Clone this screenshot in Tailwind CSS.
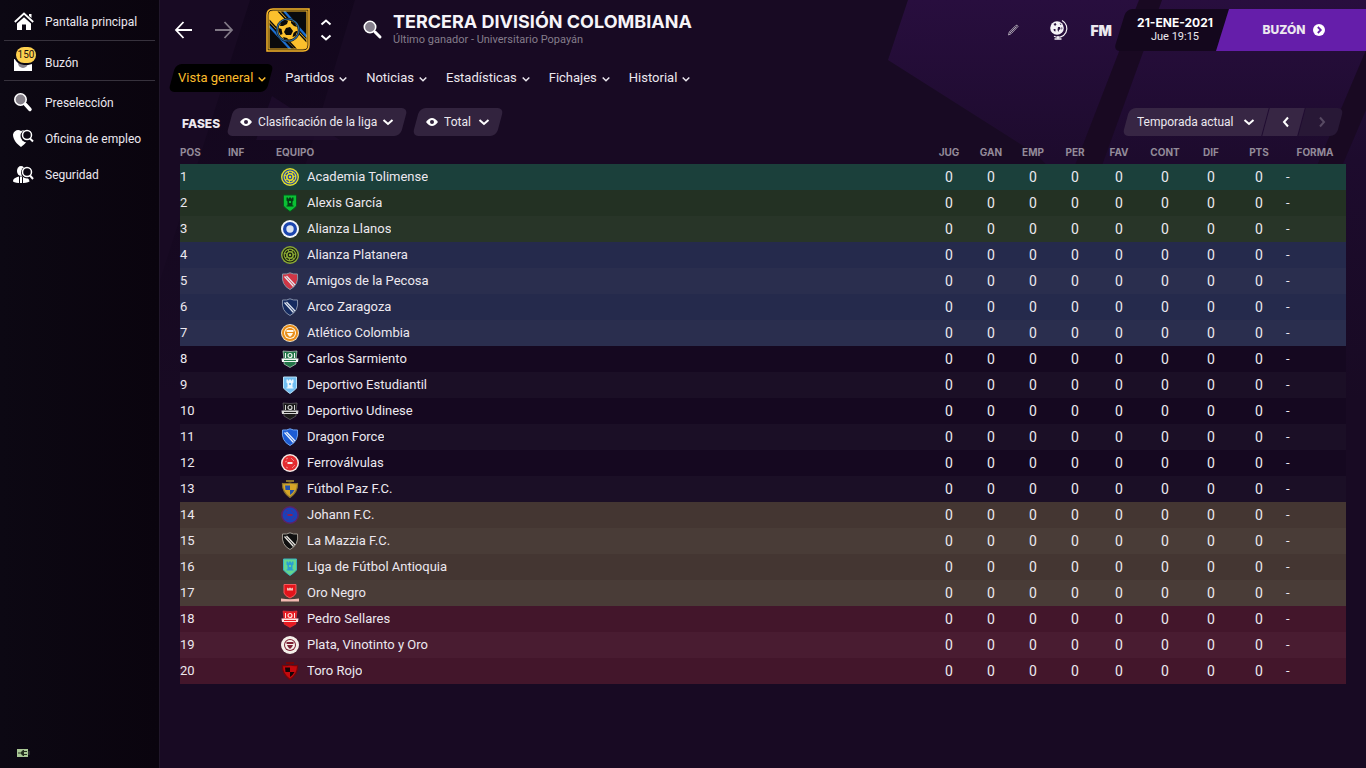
<!DOCTYPE html>
<html lang="es">
<head>
    <meta charset="UTF-8">
    <meta name="viewport" content="width=device-width, initial-scale=1.0">
    <title>Tercera División Colombiana</title>
    <script src="https://cdn.jsdelivr.net/npm/@tailwindcss/browser@4"></script>
</head>
<body class="bg-[#180a23] text-[#ece8ef] font-[Roboto,sans-serif]">
<div class="flex min-h-screen">

    <!-- Sidebar -->
    <aside class="w-40 shrink-0 flex flex-col justify-between bg-linear-to-r from-[#0c0813] to-[#0a040e] border-r border-[#21172b] text-[12px]">
        <nav class="flex flex-col">
            <a href="#" class="flex items-center h-[41px] pt-1 mx-1 pl-2 gap-[9px] border-b border-[#37323d]">
                <svg class="w-6 h-6" viewBox="0 0 24 24" fill="none">
                    <path d="M2.800 12 L12 3.500 L21.200 12" stroke="#fff" stroke-width="1.800"/>
                    <path d="M17 4h2.500v4L17 6z" fill="#fff"/>
                    <path d="M12 7.200 L5 13.500 V20 H10 V14.500 H14 V20 H19 V13.500Z" fill="#fff"/>
                </svg>
                Pantalla principal
            </a>
            <a href="#" class="flex items-center h-10 pt-1 mx-1 pl-2 gap-[9px] border-b border-[#37323d]">
                <span class="relative w-6 h-6">
                    <svg class="w-6 h-6" viewBox="0 0 24 24">
                        <path d="M2 8h18v12H2z" fill="#fff"/>
                        <circle cx="11" cy="12" r="5" fill="#858089"/>
                        <path d="M2 8 L7 13.500 H15 L20 8Z" fill="#9c98a0" opacity=".4"/>
                    </svg>
                    <span class="absolute left-1 -top-1 h-4 w-5 rounded-full bg-[#fdd04e] ring-2 ring-[#0b0712] text-[#1d1411] text-[10px] leading-4 text-center">150</span>
                </span>
                Buzón
            </a>
            <a href="#" class="flex items-center h-9 mt-1 mx-1 pl-2 gap-[9px]">
                <svg class="w-6 h-6" viewBox="0 0 24 24">
                    <path d="M13.500 13.500 L18 18.500" stroke="#fff" stroke-width="3.500" stroke-linecap="round"/>
                    <circle cx="8.500" cy="8.500" r="5.700" fill="#858089" stroke="#fff" stroke-width="1.600"/>
                </svg>
                Preselección
            </a>
            <a href="#" class="flex items-center h-9 mx-1 pl-2 gap-[9px]">
                <svg class="w-6 h-6" viewBox="0 0 24 24">
                    <path d="M1 7.500 C2 3.500 6 2 9 4 C12 2 16 3.500 17 8 C17 13 12 18 9 20 C5 17 1 13 1 7.500Z" fill="#fff"/>
                    <circle cx="15" cy="9" r="6.500" fill="#0b0712"/>
                    <circle cx="15" cy="8" r="4.500" fill="#0b0712" stroke="#fff" stroke-width="1.500"/>
                    <path d="M18 11.500 L21 14.500" stroke="#fff" stroke-width="2"/>
                </svg>
                Oficina de empleo
            </a>
            <a href="#" class="flex items-center h-9 mx-1 pl-2 gap-[9px]">
                <svg class="w-6 h-6" viewBox="0 0 24 24">
                    <ellipse cx="9" cy="8" rx="4" ry="5" fill="#fff"/>
                    <path d="M1 18.500 C1 15 5 14 7 13.500 H13 C15 15 17 15 17.500 18.500 C14 20.500 4 20.500 1 18.500Z" fill="#fff"/>
                    <path d="M7.500 13 V20 M10.500 14 V20" stroke="#0b0712" stroke-width="1"/>
                    <circle cx="15" cy="9.500" r="6" fill="#0b0712"/>
                    <circle cx="15" cy="9" r="4.500" fill="#0b0712" stroke="#fff" stroke-width="1.500"/>
                    <path d="M18 12.500 L21 16" stroke="#fff" stroke-width="2"/>
                </svg>
                Seguridad
            </a>
        </nav>
        <svg class="w-4 h-3 ml-4 mb-[9px] shrink-0" viewBox="0 0 16 12">
            <path d="M1 2h11v8H1z" fill="#a9c795"/>
            <path d="M12 4h2v4h-2z" fill="#2a2a2c"/>
            <path d="M2 6h4M8 4.500h3M8 7.500h3" stroke="#25301f"/>
            <path d="M5 5l2-2h1v6H7L5 7z" fill="#25301f"/>
        </svg>
    </aside>

    <!-- Main area -->
    <main class="relative isolate flex-1 min-w-0 overflow-hidden">

        <!-- Backdrop shapes -->
        <svg class="absolute left-0 top-0 -z-10 w-[300px] h-[400px]" viewBox="0 0 300 400">
            <defs>
                <linearGradient id="shade" x1="0" y1="0" x2="0" y2="1">
                    <stop offset="0" stop-color="#10051a" stop-opacity=".7"/>
                    <stop offset="1" stop-color="#10051a" stop-opacity="0"/>
                </linearGradient>
            </defs>
            <path d="M90 0 L195 0 L75 400 L0 400 L0 280Z" fill="url(#shade)"/>
            <path d="M112 96 L180 140 L96 140Z" fill="#1f0d2e" opacity=".7"/>
        </svg>
        <svg class="absolute right-0 top-0 -z-10 w-[520px] h-[400px]" viewBox="0 0 520 400">
            <defs>
                <linearGradient id="glow" x1="0" y1="0" x2="0" y2="1">
                    <stop offset="0" stop-color="#280e3e"/>
                    <stop offset=".4" stop-color="#1d0b2d"/>
                    <stop offset="1" stop-color="#180a23"/>
                </linearGradient>
            </defs>
            <path d="M62 0 H520 V400 H430 L190 154 L42 60Z" fill="url(#glow)"/>
            <path d="M293 0 H316 L255 168 H228Z" fill="#190922"/>
            <path d="M520 50 V110 L490 180 H465Z" fill="#190922"/>
        </svg>

        <!-- Title bar -->
        <header class="flex items-center h-[60px]">
            <button aria-label="Atrás" class="ml-3">
                <svg class="w-6 h-6" viewBox="0 0 24 24" fill="none" stroke="#fff" stroke-width="1.800"><path d="M20 12H4M11.500 4 L4 12 L11.500 20"/></svg>
            </button>
            <button aria-label="Adelante" class="ml-4">
                <svg class="w-6 h-6" viewBox="0 0 24 24" fill="none" stroke="#807885" stroke-width="1.800"><path d="M3 12H20M12.500 4 L20 12 L12.500 20"/></svg>
            </button>
            <svg class="w-11 h-11 ml-[30px]" viewBox="0 0 44 44">
                <defs><clipPath id="badge"><path d="M3 7 Q3 3 7 3 H41 V37 Q41 41 37 41 H3Z"/></clipPath></defs>
                <path d="M1 7 Q1 1 7 1 H43 V37 Q43 43 37 43 H1Z" fill="#090a0c" stroke="#fbb929" stroke-width="1.500"/>
                <g clip-path="url(#badge)">
                    <path d="M3 3 H14 L41 32 V41 H29 L3 14Z" fill="#fbc02d"/>
                    <path d="M18 3 L41 29 M3 18 L26 43" stroke="#1b6fd0" stroke-width="2.200"/>
                    <path d="M12 3 L41 34 M3 12 L32 43" stroke="#0a0a0a" stroke-width="1.500"/>
                </g>
                <circle cx="22" cy="22" r="12" fill="#0a0a0a"/>
                <circle cx="22" cy="22" r="11" fill="#0a0a0a" stroke="#2c689c" stroke-width="1.200"/>
                <circle cx="22" cy="22" r="9.800" fill="#fbc02d"/>
                <path d="M15 14l4-2 3 1-1 3-4 2-3 0zM25 13l4 2 2 4-3-1-3-3zM12.500 20l3 1 1 5-2 1-2-4zM20 20l4-1 3 4-2 4-5 0-2-3zM30 23l1.500 0-2 5-3 1 1-4zM17 29l4 1 2 2-5-1z" fill="#0a0a0a"/>
                <path d="M3 7 Q3 3 7 3 H41 V37 Q41 41 37 41 H3Z" fill="none" stroke="#fbb929" stroke-width="1.200"/>
            </svg>
            <div class="flex flex-col gap-1 ml-2">
                <button aria-label="Anterior">
                    <svg class="w-4 h-3" viewBox="0 0 16 12" fill="none" stroke="#fff" stroke-width="2"><path d="M3.500 8.500 L8 4.500 L12.500 8.500"/></svg>
                </button>
                <button aria-label="Siguiente">
                    <svg class="w-4 h-3" viewBox="0 0 16 12" fill="none" stroke="#fff" stroke-width="2"><path d="M3.500 3.500 L8 7.500 L12.500 3.500"/></svg>
                </button>
            </div>
            <button aria-label="Buscar" class="ml-[27px]">
                <svg class="w-6 h-6" viewBox="0 0 24 24">
                    <path d="M14 14 L19 19" stroke="#fff" stroke-width="3" stroke-linecap="round"/>
                    <circle cx="9" cy="9" r="5.700" fill="#857f8c" stroke="#fff" stroke-width="1.600"/>
                </svg>
            </button>
            <div class="ml-2">
                <h1 class="font-[Inter,sans-serif] text-[18px] leading-5 font-bold whitespace-nowrap text-[#f6f4f8]">TERCERA DIVISIÓN COLOMBIANA</h1>
                <p class="text-[11px] leading-4 text-[#857d8b] whitespace-nowrap">Último ganador - Universitario Popayán</p>
            </div>

            <div class="flex items-center ml-auto">
                <button aria-label="Editar">
                    <svg class="w-4 h-4" viewBox="0 0 16 16" fill="none" stroke="#a9a1af"><path d="M3.500 13 L4.300 10 L11 3.300 Q12.500 2.800 13 4.500 L6.300 11.600Z M5 11 L11.500 4.500"/></svg>
                </button>
                <button aria-label="Mundo" class="ml-[25px]">
                    <svg class="w-6 h-6" viewBox="0 0 24 24" fill="none">
                        <circle cx="11" cy="10" r="6.800" fill="#f4f1f6"/>
                        <path d="M7.500 6l2-1 1 1.500-1.500 1.500zM12 9l2 0 .5 2-1.500 1-.5 2-1-2zM13.500 5l2 1.500-1 .5zM7.500 11l2 0 0 2.500-1.500-.5zM15.500 9l1 1-1 2z" fill="#2a1440"/>
                        <path d="M16 2.500 A8.800 8.800 0 0 1 8 18.300" stroke="#f4f1f6" stroke-width="1.200"/>
                        <path d="M12 18v3M8.500 21h7" stroke="#f4f1f6" stroke-width="1.400"/>
                    </svg>
                </button>
                <button class="ml-5 font-[Inter,sans-serif] text-[14px] font-black">FM</button>
                <div class="relative ml-3 pl-[10px] w-[92px] h-[42px] flex flex-col justify-center text-center whitespace-nowrap">
                    <span class="absolute inset-y-0 -left-1 -right-3 -z-10 -skew-x-[17deg] rounded-md bg-[#14071d]"></span>
                    <strong class="font-[Inter,sans-serif] text-[12px] leading-[14px] font-bold text-white">21-ENE-2021</strong>
                    <span class="text-[11px] leading-[14px]">Jue 19:15</span>
                </div>
                <button class="flex items-center justify-center gap-2 h-[42px] w-[150px] pl-[10px] pr-1 bg-[#651eaa] [clip-path:polygon(13px_0,100%_0,100%_100%,0_100%)] font-[Inter,sans-serif] text-[12px] font-extrabold">
                    BUZÓN
                    <svg class="w-3 h-3" viewBox="0 0 12 12"><circle cx="6" cy="6" r="6" fill="#fff"/><path d="M4.800 3 L7.800 6 L4.800 9" fill="none" stroke="#651eaa" stroke-width="1.800"/></svg>
                </button>
            </div>
        </header>

        <!-- Tabs -->
        <nav id="tabs" class="flex items-center h-7 mt-1 ml-[18px] gap-[19px] text-[13px]"></nav>

        <!-- Filters -->
        <div class="flex items-center h-7 mt-4 ml-[22px] mr-[26px] text-[12px]">
            <h2 class="font-[Inter,sans-serif] text-[12px] font-extrabold pt-1">FASES</h2>
            <div class="relative ml-[10px] w-[174px] h-7 flex items-center">
                <span class="absolute inset-0 -z-10 -skew-x-[15deg] rounded-md bg-[#32233e]"></span>
                <svg class="absolute left-[10px] w-3 h-3 pointer-events-none" viewBox="0 0 12 12"><path d="M0 6 Q6 -2 12 6 Q6 14 0 6Z" fill="#fff"/><circle cx="6" cy="6" r="2" fill="#32233e"/></svg>
                <select aria-label="Vista" class="appearance-none w-full h-full bg-transparent pl-7 outline-none">
                    <option>Clasificación de la liga</option>
                </select>
                <svg class="absolute right-[10px] w-3 h-3 pointer-events-none" viewBox="0 0 12 12" fill="none" stroke="#fff" stroke-width="2"><path d="M1.500 4 L6 8 L10.500 4"/></svg>
            </div>
            <div class="relative ml-3 w-[84px] h-7 flex items-center">
                <span class="absolute inset-0 -z-10 -skew-x-[15deg] rounded-md bg-[#32233e]"></span>
                <svg class="absolute left-[10px] w-3 h-3 pointer-events-none" viewBox="0 0 12 12"><path d="M0 6 Q6 -2 12 6 Q6 14 0 6Z" fill="#fff"/><circle cx="6" cy="6" r="2" fill="#32233e"/></svg>
                <select aria-label="Tipo" class="appearance-none w-full h-full bg-transparent pl-7 outline-none">
                    <option>Total</option>
                </select>
                <svg class="absolute right-[10px] w-3 h-3 pointer-events-none" viewBox="0 0 12 12" fill="none" stroke="#fff" stroke-width="2"><path d="M1.500 4 L6 8 L10.500 4"/></svg>
            </div>
            <div class="relative flex items-center ml-auto h-7">
                <span class="absolute inset-0 -z-10 flex gap-px -skew-x-[15deg]">
                    <span class="flex-1 rounded-l-md bg-[#372644]"></span>
                    <span class="w-[35px] bg-[#372644]"></span>
                    <span class="w-[38px] rounded-r-md bg-[#281836]"></span>
                </span>
                <select aria-label="Temporada" class="appearance-none w-[142px] h-full bg-transparent pl-[11px] outline-none">
                    <option>Temporada actual</option>
                </select>
                <svg class="absolute left-[117px] w-3 h-3 pointer-events-none" viewBox="0 0 12 12" fill="none" stroke="#fff" stroke-width="2"><path d="M1.500 4 L6 8 L10.500 4"/></svg>
                <button aria-label="Temporada anterior" class="w-9 h-full flex items-center justify-center">
                    <svg class="w-3 h-3" viewBox="0 0 12 12" fill="none" stroke="#fff" stroke-width="2"><path d="M8 1.500 L4 6 L8 10.500"/></svg>
                </button>
                <button aria-label="Temporada siguiente" disabled class="w-9 h-full flex items-center justify-center">
                    <svg class="w-3 h-3" viewBox="0 0 12 12" fill="none" stroke="#584a63" stroke-width="2"><path d="M4 1.500 L8 6 L4 10.500"/></svg>
                </button>
            </div>
        </div>

        <!-- League table -->
        <div class="mt-1 ml-5 mr-5">
            <table class="w-full table-fixed border-collapse text-[13px]">
                <colgroup>
                    <col class="w-12"><col class="w-12"><col>
                    <col class="w-[42px]"><col class="w-[42px]"><col class="w-[42px]"><col class="w-[42px]">
                    <col class="w-[46px]"><col class="w-[46px]"><col class="w-[46px]"><col class="w-[50px]"><col class="w-[62px]">
                </colgroup>
                <thead>
                    <tr class="h-6 text-[10px] text-[#938b99] font-[Inter,sans-serif]">
                        <th class="p-0 text-left">POS</th>
                        <th class="p-0 text-left">INF</th>
                        <th class="p-0 text-left">EQUIPO</th>
                        <th class="p-0">JUG</th>
                        <th class="p-0">GAN</th>
                        <th class="p-0">EMP</th>
                        <th class="p-0">PER</th>
                        <th class="p-0">FAV</th>
                        <th class="p-0">CONT</th>
                        <th class="p-0">DIF</th>
                        <th class="p-0">PTS</th>
                        <th class="p-0">FORMA</th>
                    </tr>
                </thead>
                <tbody id="standings"></tbody>
            </table>
        </div>
    </main>
</div>

<script>
    var tabs = ['Vista general', 'Partidos', 'Noticias', 'Estadísticas', 'Fichajes', 'Historial']

    document.getElementById('tabs').innerHTML = tabs.map((name, i) => `
        <button class="relative flex items-center gap-[5px] h-full whitespace-nowrap ${i == 0 ? 'text-[#fbbc2c]' : ''}">
            ${i == 0 ? '<span class="absolute inset-y-0 -left-[6px] -right-1 -z-10 -skew-x-[15deg] rounded-md bg-black"></span>' : ''}
            ${name}
            <svg class="w-2 h-2 mt-px" viewBox="0 0 8 8" fill="none" stroke="currentColor" stroke-width="1.500"><path d="M.7 2.500 L4 5.800 L7.300 2.500"/></svg>
        </button>`).join('')

    var shield = 'M1.500 2 Q6 2.500 9 .8 Q12 2.500 16.500 2 Q18 13 9 17.500 Q0 13 1.500 2Z'

    // club crests, a = base colour, b = detail, c = outline
    var crests = {
        target: (a, b, c) => `<circle cx="9" cy="9" r="9" fill="${c}"/><circle cx="9" cy="9" r="7" fill="none" stroke="${b}" stroke-width="1.200"/><circle cx="9" cy="9" r="4.600" fill="none" stroke="${b}" stroke-width="1.200" stroke-dasharray="3 1"/><circle cx="9" cy="9" r="2.400" fill="${b}"/><circle cx="9" cy="9" r="1.200" fill="${a}"/>`,
        disc: (a, b, c) => `<circle cx="9" cy="9" r="9" fill="${c}"/><circle cx="9" cy="9" r="7" fill="${a}"/><circle cx="9" cy="9" r="3.700" fill="${b}"/>`,
        tower: (a, b, c) => `<path d="M2.500 1H15.500V12Q13 15 9 17.500Q5 15 2.500 12Z" fill="${a}" stroke="${c}"/><path d="M5.500 3.500h1.500v1h1v-1h2v1h1v-1h1.500v3l-1 1v4h1v1h-7v-1h1v-4l-1-1z" fill="${b}"/><path d="M8 7h2v2H8zM8 14h2v1H8z" fill="${a}"/>`,
        stripe: (a, b, c) => `<path d="${shield}" fill="${a}" stroke="${c}"/><path d="M3.500 4.500 L12.500 14.500 M5.500 4 L14 13" stroke="${b}" stroke-width="1.300"/>`,
        cup: (a, b, c) => `<circle cx="9" cy="9" r="9" fill="${c}"/><circle cx="9" cy="9" r="8" fill="${a}"/><circle cx="9" cy="9" r="6" fill="${b}"/><circle cx="9" cy="9" r="5" fill="${a}"/><path d="M5.500 6h7v2h-7zM6 9h6l-1 2-2 2-2-2z" fill="${b}"/>`,
        banner: (a, b, c) => `<path d="M2 1Q9 2 16 1L15 9V14L9 17.500L3 14V9Z" fill="${a}" stroke="${c}" stroke-width=".6"/><path d="M4.500 3v5M13.500 3v5" stroke="${b}"/><circle cx="9" cy="5.500" r="2" fill="none" stroke="${b}" stroke-width="1.200"/><path d="M.5 8.500h17l-.5 3.500H1z" fill="${b}"/><path d="M3 10.500h12" stroke="${a}"/>`,
        seal: (a, b, c) => `<circle cx="9" cy="9" r="9" fill="${c}"/><circle cx="9" cy="9" r="7.500" fill="${a}"/><path d="M5 5l2-1M10 4l3 3M4 8l2-1M5 13l2 1M11 14l3-3" stroke="${b}" stroke-width=".8" opacity=".6"/><path d="M6.500 8h5v2h-5z" fill="${b}"/>`,
        quarters: (a, b, c) => `<path d="M5 0h8v2H5z" fill="${c}"/><path d="M1.500 3.500Q5 4 9 3Q13 4 16.500 3.500Q17 12 9 17.500Q1 12 1.500 3.500Z" fill="${a}" stroke="${c}" stroke-width="1.200"/><path d="M4 5.500H9V10H4.500zM9 10H13.500Q12 13 9 15z" fill="${b}"/>`,
        crown: (a, b, c) => `<path d="M3 .5H15V9Q14 12 9 14Q4 12 3 9Z" fill="${a}" stroke="${c}"/><path d="M6 3.500l1.500 1L9 3.500l1.500 1L12 3.500V6.500H6z" fill="${b}"/><path d="M0 14.500Q9 16 18 14.500V17.500H0z" fill="${b}"/>`
    }

    var teams = [
        ['Academia Tolimense', 'bg-[#1b403b]', 'target', '#e8e02b', '#2548a4', '#e0dc2b'],
        ['Alexis García', 'bg-[#233123]', 'tower', '#0bbf34', '#063d16', '#07571c'],
        ['Alianza Llanos', 'bg-[#283528]', 'disc', '#1c45ae', '#dde4f1', '#f4f6fa'],
        ['Alianza Platanera', 'bg-[#252a4c]', 'target', '#93b237', '#161d10', '#8aa834'],
        ['Amigos de la Pecosa', 'bg-[#2a2e4e]', 'stripe', '#cf3646', '#e2e8ee', '#8894a4'],
        ['Arco Zaragoza', 'bg-[#252a4c]', 'stripe', '#152b60', '#dde3ed', '#8490a9'],
        ['Atlético Colombia', 'bg-[#2a2e4e]', 'cup', '#e88c16', '#fff6e5', '#f4e2c4'],
        ['Carlos Sarmiento', 'bg-[#150820]', 'banner', '#237548', '#f1f5f1', '#dfe7e1'],
        ['Deportivo Estudiantil', 'bg-[#1b0f26]', 'tower', '#70bdf0', '#e9f5fc', '#b8dff5'],
        ['Deportivo Udinese', 'bg-[#150820]', 'banner', '#191919', '#d5d5d5', '#777777'],
        ['Dragon Force', 'bg-[#1b0f26]', 'stripe', '#1d5cd4', '#e6effc', '#6da2f2'],
        ['Ferroválvulas', 'bg-[#150820]', 'seal', '#e42c30', '#f7e9e4', '#f7e9e4'],
        ['Fútbol Paz F.C.', 'bg-[#1b0f26]', 'quarters', '#d6a627', '#2251ae', '#8c742e'],
        ['Johann F.C.', 'bg-[#443632]', 'seal', '#1c40b8', '#8d1f52', '#5c2366'],
        ['La Mazzia F.C.', 'bg-[#493c37]', 'stripe', '#101010', '#e7e4df', '#a09a92'],
        ['Liga de Fútbol Antioquia', 'bg-[#443632]', 'tower', '#64d68e', '#2a9fd2', '#36b3c4'],
        ['Oro Negro', 'bg-[#493c37]', 'crown', '#e3141b', '#f3b9b1', '#f05a5c'],
        ['Pedro Sellares', 'bg-[#43162b]', 'banner', '#e91b22', '#ffe2df', '#f0383d'],
        ['Plata, Vinotinto y Oro', 'bg-[#491c31]', 'cup', '#f5efe9', '#7b2033', '#f5efe9'],
        ['Toro Rojo', 'bg-[#43162b]', 'quarters', '#c4090d', '#160406', '#750509']
    ]

    document.getElementById('standings').innerHTML = teams.map(([name, bg, type, a, b, c], i) => `
        <tr class="h-[26px] ${bg}">
            <td class="p-0">${i + 1}</td>
            <td class="p-0"></td>
            <td class="p-0">
                <div class="flex items-center gap-2 pl-[5px]">
                    <svg class="w-[18px] h-[18px] shrink-0" viewBox="0 0 18 18">${crests[type](a, b, c)}</svg>
                    <span class="truncate">${name}</span>
                </div>
            </td>
            ${'<td class="p-0 text-center text-[14px]">0</td>'.repeat(8)}
            <td class="p-0 pl-[2px]">-</td>
        </tr>`).join('')
</script>
</body>
</html>
